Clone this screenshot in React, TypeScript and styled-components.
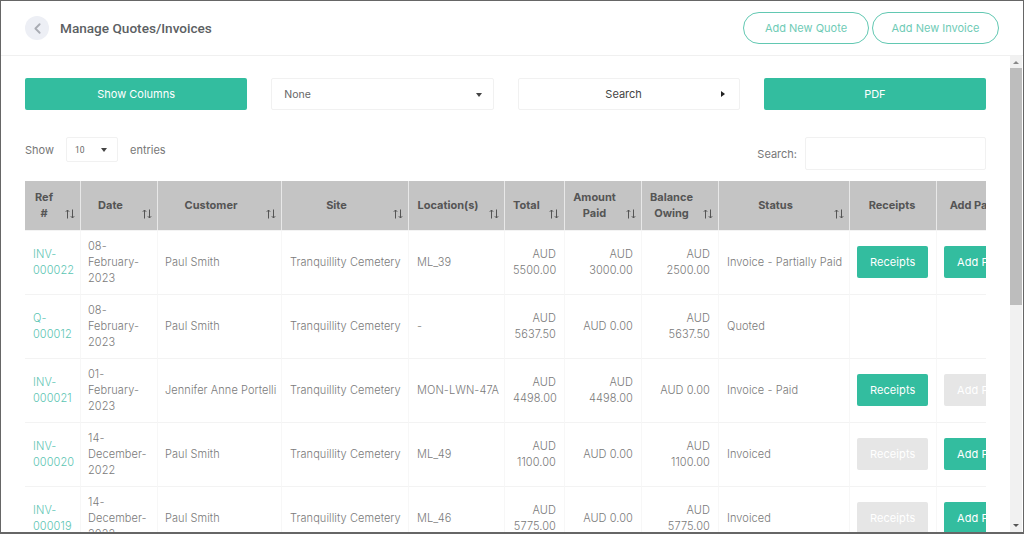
import React from "react";
import styled, { createGlobalStyle } from "styled-components";
import { ChevronLeft } from "lucide-react";

const GREEN = "#33bd9f";
const FONT = `"Inter", "Liberation Sans", sans-serif`;

const GlobalStyle = createGlobalStyle`
  html, body {
    margin: 0;
    padding: 0;
    background: #fff;
    overflow: hidden;
  }
  * {
    box-sizing: border-box;
  }
`;

type Row = {
  ref: string;
  date: string;
  customer: string;
  location: string;
  total: string;
  paid: string;
  balance: string;
  status: string;
  receipts?: boolean;
  payment?: boolean;
  quote?: boolean;
};

const rows: Row[] = [
  { ref: "INV-000022", date: "08-February-2023", customer: "Paul Smith", location: "ML_39", total: "AUD 5500.00", paid: "AUD 3000.00", balance: "AUD 2500.00", status: "Invoice - Partially Paid", receipts: true, payment: true },
  { ref: "Q-000012", date: "08-February-2023", customer: "Paul Smith", location: "-", total: "AUD 5637.50", paid: "AUD 0.00", balance: "AUD 5637.50", status: "Quoted", quote: true },
  { ref: "INV-000021", date: "01-February-2023", customer: "Jennifer Anne Portelli", location: "MON-LWN-47A", total: "AUD 4498.00", paid: "AUD 4498.00", balance: "AUD 0.00", status: "Invoice - Paid", receipts: true, payment: false },
  { ref: "INV-000020", date: "14-December-2022", customer: "Paul Smith", location: "ML_49", total: "AUD 1100.00", paid: "AUD 0.00", balance: "AUD 1100.00", status: "Invoiced", receipts: false, payment: true },
  { ref: "INV-000019", date: "14-December-2022", customer: "Paul Smith", location: "ML_46", total: "AUD 5775.00", paid: "AUD 0.00", balance: "AUD 5775.00", status: "Invoiced", receipts: false, payment: true },
];

const columns = [
  { title: "Ref #", width: 56, sort: true },
  { title: "Date", width: 77, sort: true },
  { title: "Customer", width: 124, sort: true },
  { title: "Site", width: 127, sort: true },
  { title: "Location(s)", width: 96, sort: true },
  { title: "Total", width: 60, sort: true },
  { title: "Amount Paid", width: 77, sort: true },
  { title: "Balance Owing", width: 77, sort: true },
  { title: "Status", width: 131, sort: true },
  { title: "Receipts", width: 87, sort: false },
  { title: "Add Payment", width: 100, sort: false },
];

const SortIcon = () => (
  <SortSvg viewBox="0 0 10 10" aria-hidden="true">
    <path d="M2.5 9.5V1M.8 2.8 2.5 1l1.7 1.8" />
    <path d="M7.5.5V9M5.8 7.2 7.5 9l1.7-1.8" />
  </SortSvg>
);

export default function App() {
  return (
    <>
      <GlobalStyle />
      <Frame>
        <Header>
          <TitleGroup>
            <BackButton>
              <ChevronLeft size={17} strokeWidth={2.6} />
            </BackButton>
            <Title>Manage Quotes/Invoices</Title>
          </TitleGroup>
          <HeaderActions>
            <OutlineButton $width={126}>Add New Quote</OutlineButton>
            <OutlineButton $width={127}>Add New Invoice</OutlineButton>
          </HeaderActions>
        </Header>
        <Body>
          <Content>
            <Controls>
              <PrimaryButton>Show Columns</PrimaryButton>
              <SelectBox>
                None
                <CaretDown />
              </SelectBox>
              <SearchBox>
                <SearchLabel>Search</SearchLabel>
                <CaretRight />
              </SearchBox>
              <PrimaryButton>PDF</PrimaryButton>
            </Controls>
            <TableTools>
              <LengthControl>
                Show
                <LengthSelect>
                  10
                  <CaretDown />
                </LengthSelect>
                entries
              </LengthControl>
              <FilterControl>
                Search:
                <FilterInput />
              </FilterControl>
            </TableTools>
            <TableClip>
              <Table>
                <colgroup>
                  {columns.map((c) => (
                    <col key={c.title} width={c.width} />
                  ))}
                </colgroup>
                <thead>
                  <tr>
                    {columns.map((c) => (
                      <HeadCell key={c.title} $sort={c.sort}>
                        {c.title}
                        {c.sort && <SortIcon />}
                      </HeadCell>
                    ))}
                  </tr>
                </thead>
                <tbody>
                  {rows.map((r) => (
                    <tr key={r.ref}>
                      <RefCell>{r.ref}</RefCell>
                      <Cell $tight>{r.date}</Cell>
                      <Cell $tight $nowrap>{r.customer}</Cell>
                      <Cell $nowrap>Tranquillity Cemetery</Cell>
                      <Cell $nowrap>{r.location}</Cell>
                      <Cell $right>{r.total}</Cell>
                      <Cell $right>{r.paid}</Cell>
                      <Cell $right>{r.balance}</Cell>
                      <Cell $nowrap>{r.status}</Cell>
                      <Cell $tight>
                        {!r.quote && <ActionButton $off={!r.receipts}>Receipts</ActionButton>}
                      </Cell>
                      <Cell $tight>
                        {!r.quote && <ActionButton $off={!r.payment}>Add Payment</ActionButton>}
                      </Cell>
                    </tr>
                  ))}
                </tbody>
              </Table>
            </TableClip>
          </Content>
          <ScrollTrack>
            <ArrowUp />
            <ScrollThumb />
            <ArrowDown />
          </ScrollTrack>
        </Body>
      </Frame>
    </>
  );
}

const Frame = styled.div`
  width: 1024px;
  height: 534px;
  border: 1px solid #666;
  border-bottom-width: 2px;
  background: #fff;
  display: flex;
  flex-direction: column;
  overflow: hidden;
  font-family: ${FONT};
  color: #777;
`;

const Header = styled.header`
  height: 55px;
  flex: none;
  padding: 0 24px;
  display: flex;
  align-items: center;
  justify-content: space-between;
  border-bottom: 1px solid #f0f0f0;
`;

const TitleGroup = styled.div`
  display: flex;
  align-items: center;
  gap: 11px;
`;

const BackButton = styled.div`
  width: 24px;
  height: 24px;
  border-radius: 50%;
  background: #edeff5;
  color: #a9acb3;
  display: flex;
  align-items: center;
  justify-content: center;
`;

const Title = styled.h1`
  margin: 0;
  font-family: "Roboto", sans-serif;
  font-size: 13.6px;
  font-weight: 500;
  color: #5c5f63;
`;

const HeaderActions = styled.div`
  display: flex;
  gap: 3px;
`;

const OutlineButton = styled.div<{ $width: number }>`
  width: ${(p) => p.$width}px;
  height: 32px;
  border: 1px solid #62c8b2;
  border-radius: 16px;
  color: #6fcbb6;
  font-size: 11px;
  display: flex;
  align-items: center;
  justify-content: center;
`;

const Body = styled.div`
  flex: 1;
  min-height: 0;
  display: flex;
`;

const Content = styled.main`
  flex: 1;
  min-width: 0;
  padding: 22px 24px 0;
`;

const Controls = styled.div`
  display: grid;
  grid-template-columns: repeat(4, 1fr);
  gap: 24px;
`;

const PrimaryButton = styled.div`
  height: 32px;
  background: ${GREEN};
  border-radius: 2px;
  color: #fff;
  font-size: 11px;
  display: flex;
  align-items: center;
  justify-content: center;
`;

const SelectBox = styled.div`
  height: 32px;
  padding: 1px 11px 0 12px;
  border: 1px solid #f1f1f1;
  border-radius: 2px;
  font-size: 10.5px;
  color: #666;
  display: flex;
  align-items: center;
  justify-content: space-between;
`;

const SearchBox = styled.div`
  height: 32px;
  padding: 0 14px 0 8px;
  border: 1px solid #f1f1f1;
  border-radius: 2px;
  display: flex;
  align-items: center;
`;

const SearchLabel = styled.span`
  flex: 1;
  text-align: center;
  font-size: 11px;
  color: #444;
`;

const CaretDown = styled.span`
  flex: none;
  width: 0;
  height: 0;
  border-left: 3.5px solid transparent;
  border-right: 3.5px solid transparent;
  border-top: 4px solid #444;
`;

const CaretRight = styled.span`
  flex: none;
  width: 0;
  height: 0;
  border-top: 3.5px solid transparent;
  border-bottom: 3.5px solid transparent;
  border-left: 4px solid #222;
`;

const TableTools = styled.div`
  margin-top: 27px;
  height: 33px;
  display: flex;
  justify-content: space-between;
  font-size: 11px;
  color: #777;
`;

const LengthControl = styled.div`
  height: 25px;
  display: flex;
  align-items: center;
  gap: 12px;
`;

const LengthSelect = styled.div`
  width: 52px;
  height: 25px;
  padding: 0 10px 0 8px;
  border: 1px solid #f1f1f1;
  border-radius: 2px;
  font-family: "Roboto", sans-serif;
  font-size: 8.5px;
  color: #666;
  display: flex;
  align-items: center;
  justify-content: space-between;
`;

const FilterControl = styled.div`
  display: flex;
  align-items: center;
  gap: 8px;
`;

const FilterInput = styled.div`
  width: 181px;
  height: 33px;
  border: 1px solid #f1f1f1;
  border-radius: 2px;
`;

const TableClip = styled.div`
  margin-top: 11px;
  overflow: hidden;
`;

const Table = styled.table`
  width: 1012px;
  table-layout: fixed;
  border-collapse: separate;
  border-spacing: 0;
`;

const HeadCell = styled.th<{ $sort: boolean }>`
  position: relative;
  height: 49px;
  padding: ${(p) => (p.$sort ? "0 25px 2px 8px" : "0 9px 2px 7px")};
  background: #c4c4c4;
  border-right: 1px solid #e8e8e8;
  font-size: 11px;
  line-height: 16px;
  font-weight: 700;
  color: #555;
  text-align: center;
  white-space: normal;
`;

const SortSvg = styled.svg`
  position: absolute;
  right: 5px;
  bottom: 11px;
  width: 10px;
  height: 10px;
  fill: none;
  stroke: #555;
  stroke-width: 1;
`;

const Cell = styled.td<{ $right?: boolean; $nowrap?: boolean; $tight?: boolean }>`
  height: 64px;
  padding: 0 8px 2px ${(p) => (p.$tight ? "7px" : "8px")};
  border-right: 1px solid #f7f7f7;
  border-top: 1px solid #f3f3f3;
  font-size: 11px;
  line-height: 16px;
  font-weight: 300;
  letter-spacing: 0.08px;
  color: #7a7a7a;
  text-align: ${(p) => (p.$right ? "right" : "left")};
  white-space: ${(p) => (p.$nowrap ? "nowrap" : "normal")};
`;

const RefCell = styled(Cell)`
  color: #5cc5b3;
`;

const ActionButton = styled.div<{ $off: boolean }>`
  display: inline-flex;
  align-items: center;
  justify-content: center;
  height: 32px;
  padding: 0 13px;
  background: ${(p) => (p.$off ? "#e6e6e6" : GREEN)};
  border-radius: 2px;
  color: #fff;
  font-size: 11px;
  font-weight: 400;
  white-space: nowrap;
  vertical-align: middle;
`;

const ScrollTrack = styled.div`
  flex: none;
  width: 12px;
  margin-right: 1px;
  background: #f1f1f1;
  display: flex;
  flex-direction: column;
  align-items: center;
`;

const ArrowUp = styled.span`
  flex: none;
  margin: 5px 0 4px;
  width: 0;
  height: 0;
  border-left: 3px solid transparent;
  border-right: 3px solid transparent;
  border-bottom: 3px solid #888;
`;

const ScrollThumb = styled.div`
  flex: none;
  width: 100%;
  height: 237px;
  background: #bdbdbd;
`;

const ArrowDown = styled.span`
  flex: none;
  margin-top: auto;
  margin-bottom: 5px;
  width: 0;
  height: 0;
  border-left: 3px solid transparent;
  border-right: 3px solid transparent;
  border-top: 3px solid #555;
`;
